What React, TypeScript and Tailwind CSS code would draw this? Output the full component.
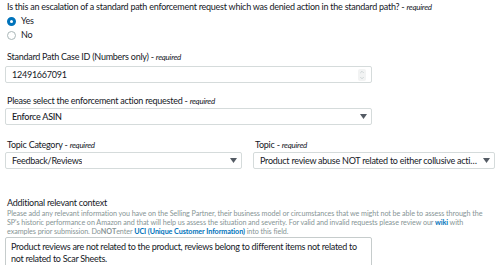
import { ChevronUp, ChevronDown } from "lucide-react"

function Req() {
  return <span> - <i className="text-[8px]">required</i></span>
}

function Caret() {
  return (
    <svg width="7" height="5" viewBox="0 0 7 5" className="shrink-0">
      <path d="M0 0h7L3.5 5z" fill="#545b64" />
    </svg>
  )
}

function Select({ value, className }: { value: string; className?: string }) {
  return (
    <div className={`flex h-[17px] items-center justify-between gap-[2px] rounded-[2px] border border-[#d5dbdb] bg-white pl-[6px] pr-[4px] ${className ?? ""}`}>
      <span className="truncate">{value}</span>
      <Caret />
    </div>
  )
}

export default function App() {
  return (
    <div className="h-[265px] w-[500px] overflow-hidden bg-white px-[5px] pt-[1px] text-[9px] leading-[12px] tracking-[-0.25px] text-[#16191f] [font-family:Lato,sans-serif]">
      <p className="pl-[2px]">
        Is this an escalation of a standard path enforcement request which was denied action in the standard path?
        <Req />
      </p>
      <div className="mt-[2px] flex flex-col gap-[2px] pl-[2px]">
        <label className="flex h-[12px] items-center gap-[5px]">
          <span className="h-[9px] w-[9px] rounded-full border-[3px] border-[#0073bb]" />
          Yes
        </label>
        <label className="flex h-[12px] items-center gap-[5px]">
          <span className="h-[9px] w-[9px] rounded-full border border-[#aab7b8]" />
          No
        </label>
      </div>

      <p className="mt-[10px] pl-[2px]">
        Standard Path Case ID (Numbers only)
        <Req />
      </p>
      <div className="mt-[3px] flex h-[17px] w-[367px] items-center justify-between rounded-[2px] border border-[#d5dbdb] bg-white pl-[6px] pr-[5px]">
        <span>12491667091</span>
        <span className="flex flex-col items-center rounded-[2px] bg-[#f2f3f3] px-[1px] text-[#aab7b8]">
          <ChevronUp size={6} strokeWidth={2} />
          <ChevronDown size={6} strokeWidth={2} />
        </span>
      </div>

      <p className="mt-[12px] pl-[2px]">
        Please select the enforcement action requested
        <Req />
      </p>
      <Select value="Enforce ASIN" className="mt-[1px] w-[367px] font-medium" />

      <div className="mt-[14px] flex gap-[11px]">
        <div className="w-[241px]">
          <p className="pl-[2px]">
            Topic Category
            <Req />
          </p>
          <Select value="Feedback/Reviews" className="mt-[1px]" />
        </div>
        <div className="w-[242px]">
          <p className="pl-[2px]">
            Topic
            <Req />
          </p>
          <Select value="Product review abuse NOT related to either collusive activity or abuse" className="mt-[1px]" />
        </div>
      </div>

      <p className="mt-[28px] pl-[2px]">Additional relevant context</p>
      <p className="whitespace-nowrap pl-[2px] text-[7.2px] leading-[9px] tracking-[-0.07px] text-[#879596]">
        Please add any relevant information you have on the Selling Partner, their business model or circumstances that we might not be able to assess through the
        <br />
        SP's historic performance on Amazon and that will help us assess the situation and severity. For valid and invalid requests please review our <b className="text-[#0073bb]">wiki</b> with
        <br />
        examples prior submission. Do<b>NOT</b>enter <b className="text-[#0073bb]">UCI (Unique Customer Information)</b> into this field.
      </p>
      <div className="mt-[1px] h-[40px] w-[367px] rounded-[2px] border border-[#c6cccc] px-[5px] pt-[3px] text-[9px] leading-[12px] tracking-[-0.28px]">
        Product reviews are not related to the product, reviews belong to different items not related to not related to Scar Sheets.
      </div>
    </div>
  )
}
